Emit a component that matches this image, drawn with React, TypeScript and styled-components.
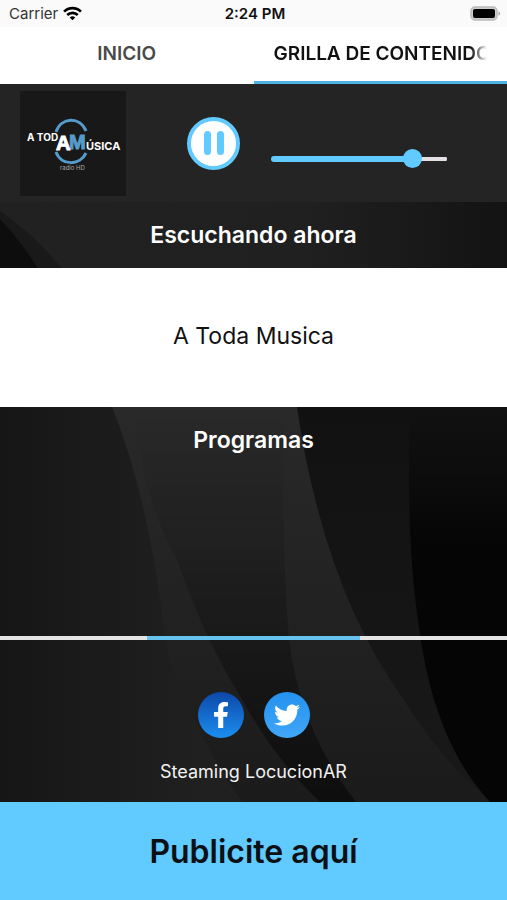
import React, { useState } from "react";
import styled, { createGlobalStyle } from "styled-components";
import { FaFacebookF, FaTwitter } from "react-icons/fa";

const accent = "#61caff";

const GlobalStyle = createGlobalStyle`
  *, *::before, *::after { box-sizing: border-box; }
  body { margin: 0; background: #181818; font-family: Inter, "Liberation Sans", sans-serif; }
  button, input { font-family: inherit; margin: 0; }
  h1, h2, p { margin: 0; }
`;

const Page = styled.div`
  display: flex;
  flex-direction: column;
  min-height: 100vh;
`;

const StatusBar = styled.header`
  display: grid;
  grid-template-columns: 1fr auto 1fr;
  align-items: center;
  height: 27px;
  padding: 0 6px 0 9px;
  background: #fafafa;
  color: #111;
`;

const Carrier = styled.div`
  display: flex;
  align-items: center;
  gap: 5px;
  font-size: 15px;
  line-height: 20px;
  color: #333;
`;

const Clock = styled.time`
  font-size: 15px;
  line-height: 20px;
  font-weight: 600;
`;

const BatterySlot = styled.div`
  display: flex;
  justify-content: flex-end;
`;

const Tabs = styled.nav`
  display: grid;
  grid-template-columns: 1fr 1fr;
  height: 57px;
  background: #fff;
`;

const Tab = styled.button<{ $active?: boolean }>`
  min-width: 0;
  padding: 0 20px 2px;
  border: 0;
  border-bottom: 3px solid ${(p) => (p.$active ? "#4fb4e3" : "#fff")};
  background: #fff;
  color: ${(p) => (p.$active ? "#111" : "#4a4a4a")};
  font-size: 19px;
  font-weight: 600;
`;

const TabLabel = styled.span<{ $fade?: boolean }>`
  display: block;
  overflow: hidden;
  white-space: nowrap;
  mask-image: ${(p) =>
    p.$fade ? "linear-gradient(to left, transparent, #000 16px)" : "none"};
`;

const Player = styled.section`
  display: flex;
  align-items: center;
  height: 118px;
  padding: 0 60px 0 20px;
  background: #242424;
`;

const Cover = styled.svg`
  flex: none;
  width: 106px;
  height: 105px;
  background: #181818;
`;

const PauseButton = styled.button`
  display: grid;
  place-items: center;
  flex: none;
  width: 53px;
  height: 53px;
  margin: 0 31px 0 61px;
  padding: 0;
  border: 4px solid ${accent};
  border-radius: 50%;
  background: #fff;
`;

const Volume = styled.input`
  appearance: none;
  flex: 1;
  min-width: 0;
  height: 19px;
  margin-top: 32px;
  background: transparent;

  &::-webkit-slider-runnable-track {
    height: 6px;
    border-radius: 3px;
    background:
      linear-gradient(${accent}, ${accent}) left center / var(--level) 6px no-repeat,
      linear-gradient(#e6dfe6, #e6dfe6) center / 100% 4px no-repeat;
  }

  &::-webkit-slider-thumb {
    appearance: none;
    width: 19px;
    height: 19px;
    margin-top: -7px;
    border-radius: 50%;
    background: ${accent};
  }
`;

const Stage = styled.main`
  position: relative;
  isolation: isolate;
  display: flex;
  flex: 1;
  flex-direction: column;
`;

const Backdrop = styled.svg`
  position: absolute;
  inset: 0;
  z-index: -1;
  width: 100%;
  height: 100%;
`;

const Heading = styled.h2`
  font-size: 23px;
  line-height: 66px;
  font-weight: 600;
  text-align: center;
  color: #fff;
`;

const NowPlaying = styled.p`
  display: grid;
  place-items: center;
  height: 139px;
  padding-bottom: 4px;
  background: #fff;
  color: #111;
  font-size: 23px;
`;

const Programs = styled.section`
  flex: 1;
`;

const Pager = styled.div`
  display: flex;
  justify-content: center;
  height: 4px;
  background: #e4e4e4;
`;

const PagerMark = styled.span`
  width: 42%;
  background: #65c3ed;
`;

const Footer = styled.footer`
  display: flex;
  flex-direction: column;
  align-items: center;
  gap: 21px;
  padding: 52px 0 17px;
  color: #f2f2f2;
  font-size: 18px;
  line-height: 26px;
`;

const SocialRow = styled.div`
  display: flex;
  gap: 20px;
`;

const SocialLink = styled.a<{ $from: string; $to: string }>`
  display: grid;
  place-items: center;
  width: 46px;
  height: 46px;
  border-radius: 50%;
  background: linear-gradient(${(p) => p.$from}, ${(p) => p.$to});
  color: #fff;
`;

const Banner = styled.a`
  display: grid;
  place-items: center;
  height: 98px;
  background: ${accent};
  color: #0b1014;
  font-size: 32px;
  font-weight: 600;
  text-decoration: none;
`;

function WifiIcon() {
  return (
    <svg width="19" height="15" viewBox="0 0 18 14" fill="none" stroke="#000" strokeWidth="2.5">
      <path d="M1 5.2C5.4.8 12.6.8 17 5.2" />
      <path d="M4 8.4C6.8 5.7 11.2 5.7 14 8.4" />
      <path d="M6.4 10.7C7.9 9.3 10.1 9.3 11.6 10.7L9 13.4Z" fill="#000" stroke="none" />
    </svg>
  );
}

function BatteryIcon() {
  return (
    <svg width="31" height="15" viewBox="0 0 31 15">
      <rect x="1" y="1" width="26" height="13" rx="4" fill="#ccc" stroke="#bbb" strokeWidth="1.5" />
      <rect x="3" y="3" width="22" height="9" rx="2" fill="#000" />
      <path d="M28.5 5.5c2.2.6 2.2 3.4 0 4z" fill="#aaa" />
    </svg>
  );
}

function CoverArt() {
  return (
    <Cover viewBox="0 0 106 105" role="img" aria-label="A Toda Música radio HD">
      <g fill="none" stroke="#559bcb" strokeWidth="3">
        <path d="M36 41C41 26 60 25 66 40" />
        <path d="M36 61C41 75 60 75 66 62" />
      </g>
      <g fontFamily="Inter, sans-serif" fontWeight="700" fill="#fff">
        <text x="7" y="50" fontSize="10">A TOD</text>
        <text x="66" y="59" fontSize="11">ÚSICA</text>
        <g fontFamily="Liberation Sans, sans-serif" fontSize="20" strokeWidth="1">
          <text x="49" y="58" fill="#559bcb" stroke="#559bcb">M</text>
          <text x="36" y="59" stroke="#fff">A</text>
        </g>
        <text x="40" y="79" fontSize="6" fontWeight="400" fill="#aaa">radio HD</text>
      </g>
    </Cover>
  );
}

function Curves() {
  return (
    <Backdrop viewBox="0 202 507 600" preserveAspectRatio="none" aria-hidden="true">
      <defs>
        <linearGradient id="base" x1="0" x2="1">
          <stop offset="0" stopColor="#161616" />
          <stop offset=".4" stopColor="#202020" />
        </linearGradient>
        <linearGradient id="top" x1="0" x2="1">
          <stop offset="0" stopColor="#212121" />
          <stop offset=".6" stopColor="#202020" />
          <stop offset="1" stopColor="#131313" />
        </linearGradient>
        <linearGradient id="band" x1="0" y1="0" x2="0" y2="1">
          <stop offset="0" stopColor="#292929" />
          <stop offset="1" stopColor="#1b1b1b" />
        </linearGradient>
        <linearGradient id="fold" x1="0" y1="0" x2="0" y2="1">
          <stop offset="0" stopColor="#000" stopOpacity="0" />
          <stop offset=".35" stopColor="#000" stopOpacity=".12" />
          <stop offset="1" stopColor="#000" stopOpacity=".48" />
        </linearGradient>
        <linearGradient id="shade" x1="0" y1="0" x2="0" y2="1">
          <stop offset="0" stopColor="#111" />
          <stop offset="1" stopColor="#191919" />
        </linearGradient>
        <linearGradient id="deep" x1="0" y1="0" x2="0" y2="1">
          <stop offset="0" stopColor="#060606" stopOpacity="0" />
          <stop offset=".35" stopColor="#050505" />
          <stop offset="1" stopColor="#050505" />
        </linearGradient>
      </defs>
      <path d="M0 202H507V802H0Z" fill="url(#base)" />
      <path d="M0 202H507V300H0Z" fill="url(#top)" />
      <path d="M0 211Q35 235 63 270H0Z" fill="#191919" />
      <path d="M0 219Q20 240 39 270H0Z" fill="#0d0d0d" />
      <path d="M112 407H297Q324 590 404 700Q440 760 490 802H242Q185 720 165 640Q150 500 112 407Z" fill="url(#band)" />
      <path d="M133 407Q143 500 177 560Q205 640 240 696Q275 760 320 802H356Q300 730 289 640Q280 520 285 407Z" fill="url(#fold)" />
      <path d="M297 407H507V802H490Q440 760 404 700Q324 590 297 407Z" fill="url(#shade)" />
      <path d="M410 407Q406 540 418 620Q432 740 490 802H507V407Z" fill="url(#deep)" />
    </Backdrop>
  );
}

export default function App() {
  const [volume, setVolume] = useState(84);
  const level = { "--level": `${5 + volume * 0.9}%` } as React.CSSProperties;

  return (
    <Page>
      <GlobalStyle />
      <StatusBar>
        <Carrier>
          Carrier <WifiIcon />
        </Carrier>
        <Clock>2:24 PM</Clock>
        <BatterySlot>
          <BatteryIcon />
        </BatterySlot>
      </StatusBar>
      <Tabs>
        <Tab>
          <TabLabel>INICIO</TabLabel>
        </Tab>
        <Tab $active>
          <TabLabel $fade>GRILLA DE CONTENIDO</TabLabel>
        </Tab>
      </Tabs>
      <Player>
        <CoverArt />
        <PauseButton aria-label="Pausa">
          <svg width="20" height="24" viewBox="0 0 20 24" fill={accent}>
            <rect width="7" height="24" rx="3.5" />
            <rect x="13" width="7" height="24" rx="3.5" />
          </svg>
        </PauseButton>
        <Volume
          type="range"
          aria-label="Volumen"
          value={volume}
          style={level}
          onChange={(e) => setVolume(Number(e.target.value))}
        />
      </Player>
      <Stage>
        <Curves />
        <Heading>Escuchando ahora</Heading>
        <NowPlaying>A Toda Musica</NowPlaying>
        <Programs>
          <Heading>Programas</Heading>
        </Programs>
        <Pager>
          <PagerMark />
        </Pager>
        <Footer>
          <SocialRow>
            <SocialLink href="#facebook" aria-label="Facebook" $from="#0d47a8" $to="#1b8ff0">
              <FaFacebookF size={26} />
            </SocialLink>
            <SocialLink href="#twitter" aria-label="Twitter" $from="#2492ef" $to="#40a6f8">
              <FaTwitter size={26} />
            </SocialLink>
          </SocialRow>
          <p>Steaming LocucionAR</p>
        </Footer>
      </Stage>
      <Banner href="#publicidad">Publicite aquí</Banner>
    </Page>
  );
}
